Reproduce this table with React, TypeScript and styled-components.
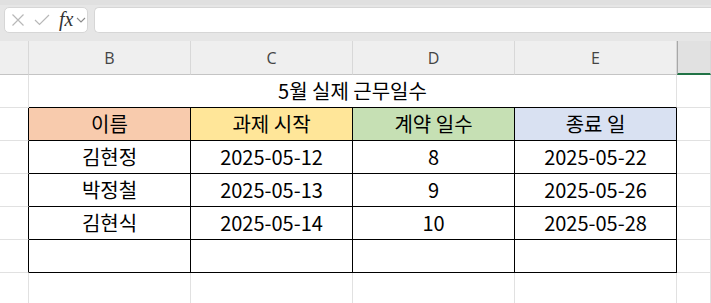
import React from 'react';
import styled, { createGlobalStyle } from 'styled-components';

const GlobalStyle = createGlobalStyle`
  html, body {
    margin: 0;
    padding: 0;
    background: #ffffff;
    overflow: hidden;
  }
  * {
    box-sizing: border-box;
  }
`;

const Window = styled.div`
  width: 711px;
  height: 303px;
  overflow: hidden;
  background: #ffffff;
`;

// formula bar strip above the grid
const FormulaBar = styled.div`
  height: 41px;
  background: #e6e6e6;
  border-top: 5px solid #e0e0e0;
  padding: 2px 0 8px 4px;
  display: flex;
  gap: 6px;
`;

const ActionBox = styled.div`
  width: 84px;
  height: 26px;
  background: #ffffff;
  border: 1px solid #d6d6d6;
  border-radius: 5px;
  display: flex;
  align-items: center;
  padding-left: 6px;
`;

const ActionIcon = styled.span<{ $gap?: number }>`
  display: flex;
  align-items: center;
  margin-right: ${p => p.$gap ?? 0}px;
`;

const FxLabel = styled.span`
  font-family: "Liberation Serif", serif;
  font-style: italic;
  font-size: 20px;
  color: #333333;
  margin-right: 3px;
  line-height: 1;
  margin-top: -2px;
`;

const FormulaInput = styled.div`
  flex: 1;
  height: 26px;
  background: #ffffff;
  border: 1px solid #d6d6d6;
  border-right: none;
  border-radius: 5px 0 0 5px;
`;

const Grid = styled.div`
  display: grid;
  grid-template-columns: 29px 162px 162px 162px 162px 1fr;
  grid-auto-rows: 33px;
  grid-template-rows: 34px;
`;

const ColHeader = styled.div<{ $selected?: boolean }>`
  background: ${p => (p.$selected ? '#e1e1e1' : '#efefef')};
  border-right: 1px solid #d8d8d8;
  border-left: ${p => (p.$selected ? '1px solid #a8a8a8' : 'none')};
  border-bottom: ${p => (p.$selected ? '2px solid #217346' : '1px solid #c4c4c4')};
  display: flex;
  align-items: center;
  justify-content: center;
  font-family: "Open Sans", "Noto Sans", sans-serif;
  font-size: 16px;
  color: #444444;
  padding-top: 1px;
`;

const Cell = styled.div<{
  $fill?: string;
  $span?: number;
  $right?: boolean;
  $bottom?: boolean;
}>`
  grid-column: span ${p => p.$span ?? 1};
  background: ${p => p.$fill ?? '#ffffff'};
  border-right: 1px solid ${p => (p.$right ? '#000000' : '#e1e1e1')};
  border-bottom: 1px solid ${p => (p.$bottom ? '#000000' : '#e1e1e1')};
  display: flex;
  align-items: flex-end;
  justify-content: center;
  padding-bottom: 3px;
  font-family: "Noto Sans CJK KR", "Noto Sans", sans-serif;
  font-size: 20px;
  line-height: 26px;
  color: #000000;
  white-space: nowrap;
`;

const headers = [
  { label: '이름', fill: '#f8cbad' },
  { label: '과제 시작', fill: '#ffe699' },
  { label: '계약 일수', fill: '#c6e0b4' },
  { label: '종료 일', fill: '#d9e1f2' },
];

const rows: string[][] = [
  ['김현정', '2025-05-12', '8', '2025-05-22'],
  ['박정철', '2025-05-13', '9', '2025-05-26'],
  ['김현식', '2025-05-14', '10', '2025-05-28'],
  ['', '', '', ''],
];

const CrossIcon = () => (
  <svg width="14" height="14" viewBox="0 0 14 14">
    <path d="M1.5 1.5 L12.5 12.5 M12.5 1.5 L1.5 12.5" stroke="#b8b8b8" strokeWidth="1.2" fill="none" />
  </svg>
);

const CheckIcon = () => (
  <svg width="16" height="12" viewBox="0 0 16 12">
    <path d="M1 6 L5.5 10.5 L15 1" stroke="#b8b8b8" strokeWidth="1.2" fill="none" />
  </svg>
);

const ChevronIcon = () => (
  <svg width="10" height="6" viewBox="0 0 10 6">
    <path d="M1 1 L5 5 L9 1" stroke="#8a8a8a" strokeWidth="1.1" fill="none" />
  </svg>
);

export default function App() {
  return (
    <Window>
      <GlobalStyle />
      <FormulaBar>
        <ActionBox>
          <ActionIcon $gap={9}><CrossIcon /></ActionIcon>
          <ActionIcon $gap={9}><CheckIcon /></ActionIcon>
          <FxLabel>fx</FxLabel>
          <ActionIcon><ChevronIcon /></ActionIcon>
        </ActionBox>
        <FormulaInput />
      </FormulaBar>

      <Grid>
        <ColHeader />
        <ColHeader>B</ColHeader>
        <ColHeader>C</ColHeader>
        <ColHeader>D</ColHeader>
        <ColHeader>E</ColHeader>
        <ColHeader $selected />

        {/* merged title row */}
        <Cell />
        <Cell $span={4} $bottom>5월 실제 근무일수</Cell>
        <Cell />

        <Cell $right />
        {headers.map(h => (
          <Cell key={h.label} $fill={h.fill} $right $bottom>{h.label}</Cell>
        ))}
        <Cell />

        {rows.map((r, i) => (
          <React.Fragment key={i}>
            <Cell $right />
            {r.map((v, j) => (
              <Cell key={j} $right $bottom>{v}</Cell>
            ))}
            <Cell />
          </React.Fragment>
        ))}

        <Cell />
        <Cell />
        <Cell />
        <Cell />
        <Cell />
        <Cell />
      </Grid>
    </Window>
  );
}
